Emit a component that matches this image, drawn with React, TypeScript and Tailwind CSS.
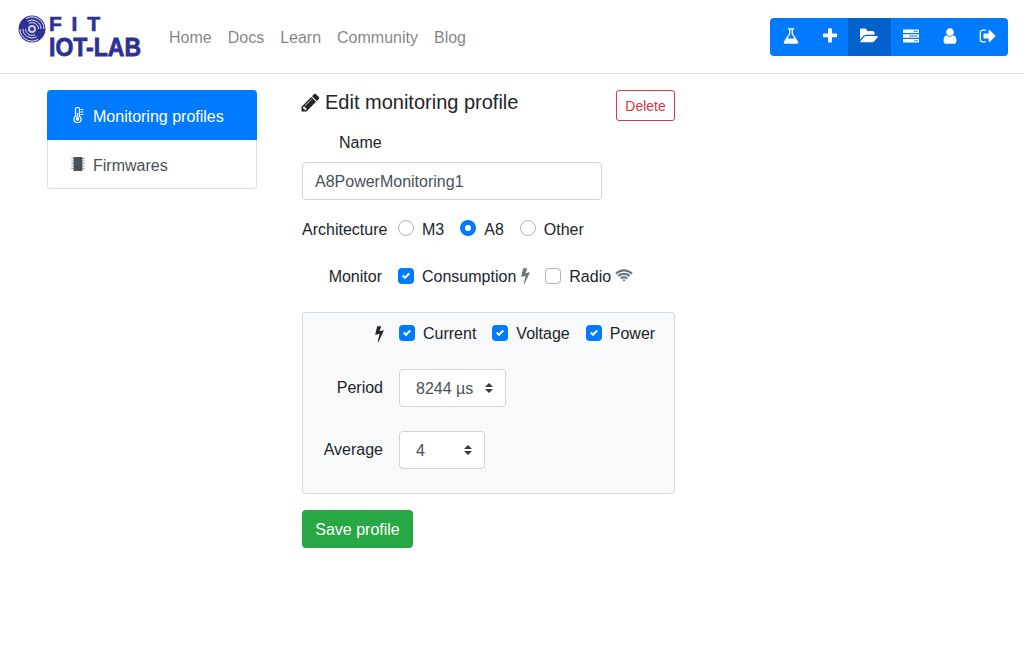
import React from "react";

const P = {
  flask: "M1591 1448q56 89 21.5 152.5t-140.5 63.5h-1152q-106 0-140.5-63.5t21.5-152.5l503-793v-399h-64q-26 0-45-19t-19-45 19-45 45-19h512q26 0 45 19t19 45-19 45-45 19h-64v399zm-779-725l-272 429h712l-272-429-20-31v-436h-128v436z",
  plus: "M1600 736v192q0 40-28 68t-68 28h-416v416q0 40-28 68t-68 28h-192q-40 0-68-28t-28-68v-416h-416q-40 0-68-28t-28-68v-192q0-40 28-68t68-28h416v-416q0-40 28-68t68-28h192q40 0 68 28t28 68v416h416q40 0 68 28t28 68z",
  folder: "M1815 952q0 31-31 66l-336 396q-43 51-120.5 86.5t-143.5 35.5h-1088q-34 0-60.5-13t-26.5-43q0-31 31-66l336-396q43-51 120.5-86.5t143.5-35.5h1088q34 0 60.5 13t26.5 43zm-343-344v160h-832q-94 0-197 47.5t-164 119.5l-337 396-5 6q0-4-.5-12.5t-.5-12.5v-960q0-92 66-158t158-66h320q92 0 158 66t66 158v32h544q92 0 158 66t66 158z",
  user: "M1536 1399q0 109-62.5 187t-150.5 78h-854q-88 0-150.5-78t-62.5-187q0-85 8.5-160.5t31.5-152 58.5-131 94-89 134.5-34.5q131 128 313 128t313-128q76 0 134.5 34.5t94 89 58.5 131 31.5 152 8.5 160.5zm-256-887q0 159-112.5 271.5t-271.5 112.5-271.5-112.5-112.5-271.5 112.5-271.5 271.5-112.5 271.5 112.5 112.5 271.5z",
  signout: "M704 1440q0 4 1 20t.5 26.5-3 23.5-10 19.5-20.5 6.5h-320q-119 0-203.5-84.5t-84.5-203.5v-704q0-119 84.5-203.5t203.5-84.5h320q13 0 22.5 9.5t9.5 22.5q0 4 1 20t.5 26.5-3 23.5-10 19.5-20.5 6.5h-320q-66 0-113 47t-47 113v704q0 66 47 113t113 47h312l11.5 1 11.5 3 8 5.5 7 9 2 13.5zm928-544q0 26-19 45l-544 544q-19 19-45 19t-45-19-19-45v-288h-448q-26 0-45-19t-19-45v-384q0-26 19-45t45-19h448v-288q0-26 19-45t45-19 45 19l544 544q19 19 19 45z",
  pencil: "M491 1536l91-91-235-235-91 91v107h128v128h107zm523-928q0-22-22-22-10 0-17 7l-542 542q-7 7-7 17 0 22 22 22 10 0 17-7l542-542q7-7 7-17zm-54-192l416 416-832 832h-416v-416zm683 96q0 53-37 90l-166 166-416-416 166-165q36-38 90-38 53 0 91 38l235 234q37 39 37 91z",
  bolt: "M1333 566q18 20 7 44l-540 1157q-13 25-42 25-4 0-14-2-17-5-25.5-19t-4.5-30l197-808-406 101q-4 1-12 1-18 0-31-11-18-15-13-39l201-825q4-14 16-23t28-9h328q19 0 32 12.5t13 29.5q0 8-5 18l-171 463 396-98q8-2 12-2 19 0 34 15z",
  wifi: "M1024 1523q-20 0-93-73.5t-73-93.5q0-32 62.5-54t103.5-22 103.5 22 62.5 54q0 20-73 93.5t-93 73.5zm270-271q-2 0-40-25t-101.5-50-128.5-25-128.5 25-101 50-40.5 25q-18 0-93.5-75t-75.5-93q0-13 10-23 78-77 196-121t233-44 233 44 196 121q10 10 10 23 0 18-75.5 93t-92.5 75zm273-272q-11 0-23-8-136-105-252-154.5t-268-49.5q-85 0-170.5 22t-149 53-113.5 62-79 53-31 22q-17 0-92-75t-75-93q0-12 10-22 132-132 320-205t380-73 380 73 320 205q10 10 10 22 0 18-75 93t-92 75zm271-271q-11 0-22-9-179-157-371.5-236.5t-420.5-79.5-420.5 79.5-371.5 236.5q-11 9-22 9-17 0-92.5-75t-75.5-93q0-13 10-23 187-186 445-288t527-102 527 102 445 288q10 10 10 23 0 18-75.5 93t-92.5 75z",
};

function Fa({ d, w = 1792, h = 1792, className }: { d: string; w?: number; h?: number; className?: string }) {
  return (
    <svg viewBox={`0 0 ${w} ${h}`} className={className} fill="currentColor" aria-hidden="true">
      <path d={d} />
    </svg>
  );
}

function Tasks() {
  return (
    <svg viewBox="0 0 16 14" className="w-[16px] h-[14px]" fill="currentColor" aria-hidden="true">
      <path fillRule="evenodd" d="M0 .5h16v3.4H0zM10.5 1.7v1h4v-1z" />
      <path fillRule="evenodd" d="M0 5.3h16v3.4H0zM6 6.5v1h8.5v-1z" />
      <path fillRule="evenodd" d="M0 10.1h16v3.4H0zM11.5 11.3v1h3v-1z" />
    </svg>
  );
}

function Thermo() {
  return (
    <svg viewBox="0 0 11 16" className="w-[11px] h-[16px]" fill="none" stroke="currentColor" aria-hidden="true">
      <path d="M2.5 2.4a2 2 0 0 1 4 0v6.8a3.6 3.6 0 1 1-4 0z" strokeWidth="1.2" />
      <path d="M4.5 6v6" strokeWidth="1.5" />
      <circle cx="4.5" cy="12.1" r="1.8" fill="currentColor" stroke="none" />
      <path d="M7.5 2.5h3M7.5 5h3M7.5 7.5h3" strokeWidth="1" />
    </svg>
  );
}

function Chip() {
  return (
    <svg viewBox="0 0 14 16" className="w-[14px] h-[16px]" fill="currentColor" aria-hidden="true">
      <rect x="2.5" y="1" width="9" height="14" rx="0.6" />
      <path d="M0.5 2h1.3v1h-1.3zM0.5 4.5h1.3v1h-1.3zM0.5 7h1.3v1h-1.3zM0.5 9.5h1.3v1h-1.3zM0.5 12h1.3v1h-1.3zM12.2 2h1.3v1h-1.3zM12.2 4.5h1.3v1h-1.3zM12.2 7h1.3v1h-1.3zM12.2 9.5h1.3v1h-1.3zM12.2 12h1.3v1h-1.3z" opacity="0.7" />
    </svg>
  );
}

function Disc() {
  return (
    <svg viewBox="0 0 28 28" className="w-[28px] h-[28px] shrink-0" aria-hidden="true">
      <circle cx="14" cy="14" r="13.5" fill="#2e3192" />
      <g fill="none" stroke="#fff" strokeWidth="0.9">
        <path d="M8 3.6A12 12 0 0 1 26 14" />
        <path d="M9.5 6.2A9 9 0 0 1 23 14" />
        <path d="M11 8.4A6.5 6.5 0 0 1 20.5 14" />
        <path d="M2 14A12 12 0 0 0 20 24.4" />
        <path d="M5 14A9 9 0 0 0 18.5 21.8" />
        <path d="M7.5 14A6.5 6.5 0 0 0 17 19.6" />
      </g>
      <circle cx="14" cy="14" r="4" fill="#c9cbe6" />
      <circle cx="14" cy="14" r="2" fill="#2e3192" />
    </svg>
  );
}

function Check({ on = true, up = false }: { on?: boolean; up?: boolean }) {
  const lift = up ? "-mt-[2px]" : "";
  if (!on) return <span className={`w-4 h-4 rounded-[4px] bg-white border border-[#adb5bd] shrink-0 ${lift}`} />;
  return (
    <span className={`w-4 h-4 rounded-[4px] bg-[#007bff] shrink-0 flex items-center justify-center ${lift}`}>
      <svg viewBox="0 0 8 8" className="w-2 h-2" fill="#fff" aria-hidden="true">
        <path d="M6.564.75l-3.59 3.612-1.538-1.55L0 4.26l2.974 2.99L8 2.193z" />
      </svg>
    </span>
  );
}

function Radio({ on = false }: { on?: boolean }) {
  if (!on) return <span className="w-4 h-4 rounded-full bg-white border border-[#adb5bd] shrink-0 -mt-[2px]" />;
  return (
    <span className="w-4 h-4 rounded-full bg-[#007bff] shrink-0 flex items-center justify-center -mt-[2px]">
      <span className="w-[6px] h-[6px] rounded-full bg-white" />
    </span>
  );
}

function Select({ value, width }: { value: string; width: string }) {
  return (
    <div className={`relative ${width}`}>
      <select
        defaultValue={value}
        className="appearance-none w-full h-[38px] bg-white border border-[#ced4da] rounded-[4px] pl-4 pt-[2px] text-base text-[#495057] outline-none"
      >
        <option>{value}</option>
      </select>
      <svg viewBox="0 0 4 5" className="absolute right-[13px] top-[14px] w-[8px] h-[10px] pointer-events-none" fill="#343a40" aria-hidden="true">
        <path d="M2 0L0 2h4zm0 5L0 3h4z" />
      </svg>
    </div>
  );
}

const navBtn = "h-[38px] flex items-center justify-center text-white pb-[2px]";

export default function App() {
  return (
    <div className="min-h-[654px] bg-white text-[#212529] text-base font-['Liberation_Sans',Arial,sans-serif]">
      <header className="h-[74px] border-b border-[#dfdfdf] flex items-center pl-[18px] pr-4">
        <div className="flex items-start w-[124px] text-[#2e3192] -mt-[1px]">
          <Disc />
          <div className="ml-[3px] w-[93px] font-bold">
            <div className="flex justify-between w-[51px] text-[21px] leading-[18px] h-[18px] [-webkit-text-stroke:0.6px_#2e3192]">
              <span>F</span><span>I</span><span>T</span>
            </div>
            <div className="mt-[4px] text-[23px] leading-[20px] h-[20px] whitespace-nowrap origin-left scale-y-110 [-webkit-text-stroke:0.7px_#2e3192]">IOT-LAB</div>
          </div>
        </div>
        <nav className="flex items-center gap-4 ml-[27px] text-[rgba(0,0,0,0.5)] pt-[2px]">
          <a>Home</a><a>Docs</a><a>Learn</a><a>Community</a><a>Blog</a>
        </nav>
        <div className="ml-auto flex rounded-[4px] overflow-hidden bg-[#007bff]">
          <div className={`${navBtn} w-[41px]`}><Fa d={P.flask} className="w-[18px] h-[18px]" /></div>
          <div className={`${navBtn} w-[37px]`}><Fa d={P.plus} className="w-[18px] h-[18px]" /></div>
          <div className={`${navBtn} w-[43px] bg-[#0062cc]`}><Fa d={P.folder} w={1920} className="w-[19px] h-[18px]" /></div>
          <div className={`${navBtn} w-[40px]`}><Tasks /></div>
          <div className={`${navBtn} w-[37px]`}><Fa d={P.user} className="w-[18px] h-[18px]" /></div>
          <div className={`${navBtn} w-[40px]`}><Fa d={P.signout} className="w-[18px] h-[18px]" /></div>
        </div>
      </header>

      <main className="flex items-start pl-[47px] pt-4 gap-[45px]">
        <aside className="w-[210px]">
          <div className="h-[50px] rounded-t-[4px] bg-[#007bff] text-white flex items-center pl-[26px] gap-[9px]">
            <Thermo /><span className="pt-[4px]">Monitoring profiles</span>
          </div>
          <div className="h-[49px] rounded-b-[4px] border border-t-0 border-[rgba(0,0,0,0.125)] text-[#495057] flex items-center pl-[23px] gap-[8px]">
            <Chip /><span className="pt-[4px]">Firmwares</span>
          </div>
        </aside>

        <section className="w-[373px]">
          <div className="flex items-start justify-between h-[41px]">
            <h5 className="flex items-center text-xl leading-6 font-normal text-[#212529]">
              <Fa d={P.pencil} className="w-[21px] h-[21px] -ml-[2px] mr-[4px]" />Edit monitoring profile
            </h5>
            <button className="h-[31px] w-[59px] border border-[#dc3545] text-[#dc3545] text-sm rounded-[3px] bg-white">Delete</button>
          </div>
          <div className="pl-[37px] leading-6 h-6">Name</div>
          <input
            readOnly
            value="A8PowerMonitoring1"
            className="block mt-[7px] w-[300px] h-[38px] border border-[#ced4da] rounded-[4px] px-3 pt-[2px] text-base text-[#495057] bg-white outline-none"
          />
          <div className="flex items-center mt-[17px] h-6">
            <span className="w-[96px] pt-[2px]">Architecture</span>
            <Radio /><span className="ml-2 mr-4 pt-[2px]">M3</span>
            <Radio on /><span className="ml-2 mr-4 pt-[2px]">A8</span>
            <Radio /><span className="ml-2 pt-[2px]">Other</span>
          </div>
          <div className="flex items-center mt-[24px] h-6">
            <span className="w-[80px] text-right mr-4">Monitor</span>
            <Check up /><span className="ml-2">Consumption</span>
            <Fa d={P.bolt} className="w-[17px] h-[17px] text-[#6c757d] ml-[1px] -mt-[3px]" />
            <span className="ml-[11px]" />
            <Check on={false} up /><span className="ml-2">Radio</span>
            <Fa d={P.wifi} w={2048} className="w-[18px] h-[16px] text-[#6c757d] ml-[4px] -mt-[2px]" />
          </div>
          <div className="mt-[23px] h-[182px] border border-[rgba(0,0,0,0.125)] rounded-[4px] bg-[#f8f9fa] pt-[8px]">
            <div className="flex items-center h-6">
              <span className="w-[85px] flex justify-end mr-[11px]"><Fa d={P.bolt} className="w-[17px] h-[17px]" /></span>
              <Check /><span className="ml-2 mr-4 pt-[2px]">Current</span>
              <Check /><span className="ml-2 mr-4 pt-[2px]">Voltage</span>
              <Check /><span className="ml-2 pt-[2px]">Power</span>
            </div>
            <div className="flex items-center mt-[24px]">
              <span className="w-[80px] text-right mr-4">Period</span>
              <Select value="8244 µs" width="w-[107px]" />
            </div>
            <div className="flex items-center mt-[24px]">
              <span className="w-[80px] text-right mr-4">Average</span>
              <Select value="4" width="w-[86px]" />
            </div>
          </div>
          <button className="mt-4 h-[38px] w-[111px] rounded-[4px] bg-[#28a745] text-white pt-[2px]">Save profile</button>
        </section>
      </main>
    </div>
  );
}
